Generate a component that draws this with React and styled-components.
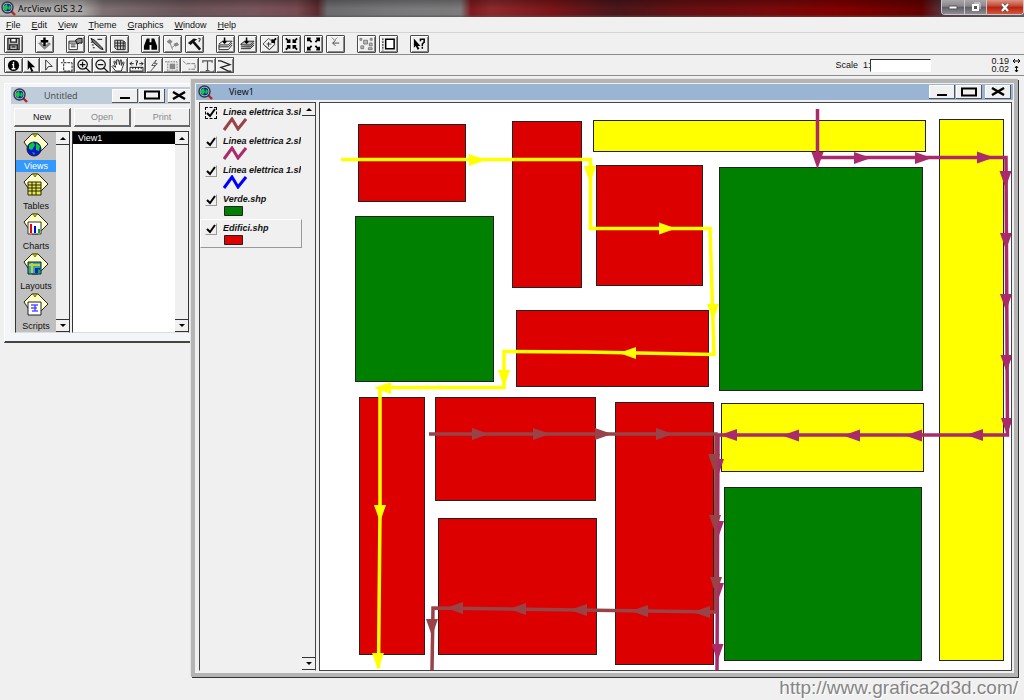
import React from "react";
import styled, { createGlobalStyle } from "styled-components";

const GlobalStyle = createGlobalStyle`
  * {
    box-sizing: border-box;
  }
  body {
    margin: 0;
    background: #f0f0f0;
  }
  button, input, ul {
    margin: 0;
    padding: 0;
    font: inherit;
    color: inherit;
  }
  svg {
    display: block;
  }
`;

const Page = styled.div`
  display: flex;
  flex-direction: column;
  min-height: 100vh;
  background: #f0f0f0;
  color: #111;
  font-family: "Liberation Sans", Arial, sans-serif;
  font-size: 9px;
  line-height: 12px;
`;

/* application frame */
const AppTitleBar = styled.header`
  display: flex;
  align-items: center;
  height: 17px;
  padding-left: 1px;
  gap: 2px;
  font-family: "Open Sans", sans-serif;
  color: #000;
  background:
    linear-gradient(rgba(0, 0, 0, 0.25), transparent 50%, transparent 85%, rgba(80, 80, 80, 0.7)),
    linear-gradient(
      90deg,
      #b5b3b3 0,
      #aaa6a6 8%,
      #7d7073 10%,
      #6b5559 18%,
      #77555b 25%,
      #754a50 29%,
      #5a2a2e 31%,
      #6b6b6e 32%,
      #77777a 38%,
      #7c7a7b 45%,
      #7d1a1d 46%,
      #8c2a2c 48%,
      #7a1418 54%,
      #4a171b 60%,
      #641013 66%,
      #780a0b 75%,
      #820000 82%,
      #640000 90%,
      #55353f 92%,
      #6d6570 100%
    );
`;
const AppTitle = styled.h1`
  flex: 1;
  margin: 0;
  font-size: 9px;
  font-weight: 400;
`;
const AppControls = styled.div`
  display: flex;
  align-self: flex-start;
  height: 15px;
  border: 1px solid #c8c8cc;
  border-top: 0;
  border-radius: 0 0 4px 4px;
  overflow: hidden;
`;
const AppControl = styled.button`
  display: grid;
  place-items: center;
  width: ${(p) => (p.$close ? 37 : 22)}px;
  border: 0;
  border-left: ${(p) => (p.$first ? "0" : "1px solid #c8c8cc")};
  background: ${(p) =>
    p.$close
      ? "linear-gradient(#dc9487, #c4452f 45%, #b32410 50%, #d8553a)"
      : "linear-gradient(#aaa6aa, #89858b 45%, #605c64 50%, #918d95)"};
`;
const MenuBar = styled.nav`
  display: flex;
  align-items: center;
  gap: 11px;
  height: 16px;
  padding-left: 6px;
  border-bottom: 1px solid #d4d4d4;
`;
const MenuItem = styled.button`
  border: 0;
  background: none;
  &::first-letter {
    text-decoration: underline;
  }
`;
const ButtonBar = styled.div`
  display: flex;
  align-items: center;
  gap: 12px;
  height: 22px;
  padding-left: 4px;
  border-bottom: 1px solid #8c8c8c;
`;
const ButtonGroup = styled.div`
  display: flex;
  gap: 3px;
`;
const IconButton = styled.button`
  display: grid;
  place-items: center;
  width: 19px;
  height: 18px;
  border: 1px solid #4c4c4c;
  border-radius: 1px;
  background: #f0f0f0;
  box-shadow: inset 1px 1px #fff, inset -1px -1px #8a8a8a;
  color: #000;
`;
const ToolBar = styled.div`
  display: flex;
  align-items: center;
  height: 21px;
  padding: 0 3px 0 4px;
  border-bottom: 1px solid #8c8c8c;
`;
const ToolStrip = styled.div`
  display: flex;
  width: 230px;
`;
const ToolButton = styled(IconButton)`
  flex: 1;
  width: auto;
  height: 16px;
  border-left-width: ${(p) => (p.$first ? 1 : 0)}px;
  background: ${(p) => (p.$active ? "#fff" : "#f0f0f0")};
`;
const ScaleField = styled.label`
  display: flex;
  align-items: center;
  margin-left: auto;
  margin-right: 60px;
`;
const ScaleInput = styled.input`
  width: 61px;
  height: 13px;
  border: 1px solid #fff;
  border-top-color: #333;
  border-left-color: #333;
  background: #fff;
`;
const Coordinates = styled.div`
  display: flex;
  align-items: center;
  gap: 3px;
  line-height: 8px;
`;

/* child windows */
const Desktop = styled.main`
  flex: 1;
  display: flex;
  align-items: flex-start;
  padding: 3px 6px 0 4px;
`;
const ProjectWindow = styled.section`
  flex: none;
  width: 187px;
  margin-top: 4px;
  padding: 3px 0 8px 6px;
  border: 1px solid #fff;
  border-right: 0;
  border-bottom: 2px solid #444;
  background: #f3f5f9;
`;
const ViewWindow = styled.section`
  flex: 1;
  align-self: stretch;
  min-width: 0;
  display: flex;
  flex-direction: column;
  padding: 1px;
  border: 4px solid #b4b4b4;
  box-shadow: 1px 1px #333, -1px -1px #e4e4e4;
  background: #f0f0f0;
`;
const WindowTitleBar = styled.div`
  display: flex;
  align-items: center;
  gap: 16px;
  height: ${(p) => (p.$active ? 16 : 17)}px;
  padding: 0 ${(p) => (p.$active ? 2 : 0)}px 0 2px;
  background: ${(p) => (p.$active ? "#9ab4d3" : "#bfcddb")};
  color: ${(p) => (p.$active ? "#000" : "#444")};
  font-family: "Open Sans", sans-serif;
`;
const WindowTitle = styled.h2`
  flex: 1;
  margin: 0;
  font-size: 9px;
  font-weight: 400;
`;
const WindowControls = styled.div`
  display: flex;
  gap: 1px;
`;
const WindowControl = styled.button`
  display: grid;
  place-items: center;
  width: ${(p) => (p.$narrow ? 23 : 26)}px;
  height: 14px;
  margin-left: ${(p) => (p.$apart ? 2 : 0)}px;
  border: 0;
  border-right: 1px solid #555;
  border-bottom: 1px solid #555;
  background: #f0f0f0;
  box-shadow: inset 1px 1px #fff;
`;
const ProjectActions = styled.div`
  display: flex;
  gap: 3px;
  padding: 4px 0 4px 3px;
  background: #f0f0f0;
`;
const ProjectButton = styled.button`
  flex: 1;
  height: 19px;
  border: 1px solid #fff;
  border-right: 2px solid #666;
  border-bottom: 2px solid #666;
  background: #f0f0f0;
  &:disabled {
    color: #8a8a8a;
  }
`;
const ProjectBody = styled.div`
  display: flex;
  gap: 2px;
  padding: 0 2px 0 4px;
  background: #f0f0f0;
`;
const ListFrame = styled.div`
  display: flex;
  flex: ${(p) => (p.$grow ? "1" : "none")};
  border: 1px solid #333;
  border-bottom-color: #ddd;
  background: #fff;
`;
const DocTypes = styled.ul`
  width: 40px;
  list-style: none;
  background: #c0c0c0;
`;
const DocType = styled.li`
  display: flex;
  flex-direction: column;
  align-items: center;
  height: 40px;
  padding-top: 1px;
`;
const DocTypeLabel = styled.button`
  width: 100%;
  height: 12px;
  margin-top: 1px;
  border: 0;
  background: ${(p) => (p.$active ? "#3399ff" : "none")};
  color: ${(p) => (p.$active ? "#fff" : "#111")};
`;
const DocList = styled.ul`
  flex: 1;
  list-style: none;
`;
const DocItem = styled.li`
  height: 12px;
  padding-left: 5px;
  background: #000;
  color: #fff;
`;
const ScrollTrack = styled.div`
  display: flex;
  flex-direction: column;
  justify-content: space-between;
  width: 13px;
  background: #f0f0f0;
`;
const ScrollButton = styled.button`
  display: grid;
  place-items: center;
  height: 13px;
  border: 0;
  border-bottom: 1px solid #333;
  border-top: ${(p) => (p.$down ? "1px solid #333" : "0")};
  background: #f0f0f0;
`;
const ViewBody = styled.div`
  flex: 1;
  display: flex;
  gap: 3px;
  min-height: 0;
  padding: 2px 1px 1px 3px;
`;
const Contents = styled.div`
  display: flex;
  flex: none;
  width: 117px;
  border: 1px solid #444;
  border-bottom-color: #f0f0f0;
`;
const ThemeList = styled.ul`
  flex: 1;
  min-width: 0;
  list-style: none;
`;
const ThemeItem = styled.li`
  display: flex;
  gap: 6px;
  height: 29px;
  padding: 3px 0 0 4px;
  border: 1px solid ${(p) => (p.$selected ? "#fff" : "transparent")};
  border-right-color: ${(p) => (p.$selected ? "#999" : "transparent")};
  border-bottom-color: ${(p) => (p.$selected ? "#999" : "transparent")};
`;
const TickCell = styled.span`
  display: grid;
  flex: none;
  width: 12px;
  height: 12px;
  > * {
    grid-area: 1 / 1;
  }
`;
const TickBox = styled.input`
  appearance: none;
  width: 12px;
  height: 12px;
  border: 1px solid #f0f0f0;
  border-right-color: #999;
  border-bottom-color: #999;
  ${(p) => p.$focus && "border: 1px dashed #000;"}
`;
const TickMark = styled.svg`
  pointer-events: none;
  width: 12px;
  height: 12px;
`;
const ThemeText = styled.label`
  display: flex;
  flex-direction: column;
  flex: 1;
  min-width: 0;
  overflow: hidden;
  font-style: italic;
  font-weight: 700;
  line-height: 10px;
  white-space: nowrap;
`;
const MapPane = styled.div`
  flex: 1;
  min-width: 0;
  border: 1px solid #444;
  background: #fff;
`;
const MapDrawing = styled.svg`
  width: 100%;
  height: 100%;
`;
const Footer = styled.footer`
  height: 23px;
  padding-right: 6px;
  text-align: right;
`;
const SiteLink = styled.a`
  color: #858585;
  font-size: 19px;
  line-height: 22px;
  text-decoration: none;
  text-shadow: 1px 1px #fff;
`;

/* icons */
const AppIcon = () => (
  <svg width="15" height="15" viewBox="0 0 15 15">
    <path d="M9 9l5 5" stroke="#b22" strokeWidth="2.4" />
    <circle cx="6.5" cy="6.5" r="5.5" fill="#cde" stroke="#333" strokeWidth="1.4" />
    <circle cx="6.5" cy="6.5" r="4" fill="#12a" />
    <path d="M3 5l3-2 1 4-2 3-2-2z" fill="#1c3" />
    <path d="M8 4l2 2-1 3-2-1z" fill="#1c3" />
  </svg>
);

const gray = "#888";
const BUTTON_GROUPS = [
  [
    ["Save Project", <path d="M2 1h12v12H2zM5 1v4h6V1M4 13V8h8v5M6 10h4" fill="#bbb" stroke="#222" strokeWidth="1.4" />],
  ],
  [
    ["Add Theme", <><path d="M1 6l3-1 4 4 5-4 2 2-7 6z" fill={gray} /><path d="M8 0v9M4 4h8" stroke="#000" strokeWidth="2.6" /></>],
  ],
  [
    ["Theme Properties", <><path d="M1 4h9v9H1zM1 6h9M3 8h5M3 10h5" fill="#fff" stroke="#222" /><path d="M8 3l3-2h4v5h-3l-2 1z" fill={gray} stroke="#000" /></>],
    ["Edit Legend", <><path d="M1 1l4 2 8 8 1 2-3-1-8-7z" fill="#777" stroke="#111" /><path d="M1 5h2M2 8h2M3 11h2M8 2h5" stroke="#000" /></>],
    ["Open Theme Table", <path d="M3 3h8l3 2v8H5l-2-2zM3 6h11M3 9h11M6 3v10M9 3v10M12 4v9" fill="#ccc" stroke="#222" />],
  ],
  [
    ["Find", <path d="M4 1h3v4h2V1h3l3 8v4H9V8H7v5H1V9z" fill="#000" />],
    ["Locate Address", <><path d="M2 4l3-2 3 2-2 3-3-1zM9 7l4-2 2 3-4 2z" fill={gray} /><path d="M5 5l3 8M11 8l-4 3" stroke={gray} /></>],
    ["Query Builder", <><path d="M1 6l6-5 4 1-3 2 7 8-2 2L6 6 4 8z" fill="#111" /><path d="M12 1h2v2h-1v2" fill="none" stroke="#333" /></>],
  ],
  [
    ["Zoom to Full Extent", <><path d="M1 7l4-3h10l-4 4H1v2h10l4-4M1 10v3h10l4-5" fill="none" stroke="#222" /><path d="M7 0v6M5 4l2 2 2-2" stroke="#000" strokeWidth="1.6" fill="none" /></>],
    ["Zoom to Active Theme", <><path d="M1 7l4-3h10l-4 4H1zM1 10h10l4-4M1 12h10l4-4" fill="#bbb" stroke="#222" /><path d="M7 0v6M5 4l2 2 2-2" stroke="#000" strokeWidth="1.6" fill="none" /></>],
    ["Zoom to Selected", <><path d="M1 7l6-6 7 6-6 6zM3 9l5 4 5-5" fill="none" stroke="#444" /><path d="M7 5v5M5 7h5" stroke="#333" /><path d="M15 1l-4 4M11 2v3h3" stroke="#000" strokeWidth="2" fill="none" /></>],
    ["Zoom In", <path d="M2 1l4 4M6 2v3H3M14 1l-4 4M10 2v3h3M2 13l4-4M6 12V9H3M14 13l-4-4M10 12V9h3" stroke="#000" strokeWidth="1.8" fill="none" />],
    ["Zoom Out", <path d="M2 1l4 4M2 4V1h3M14 1l-4 4M11 1h3v3M2 13l4-4M2 10v3h3M14 13l-4-4M11 13h3v-3" stroke="#000" strokeWidth="1.8" fill="none" />],
    ["Zoom Previous", <><path d="M4 0l3 3 3-3" stroke={gray} fill="none" /><path d="M12 6H5M8 3L5 6l3 3" stroke="#444" fill="none" /></>],
  ],
  [
    ["Select Features", <path d="M5 3h4v4H5zM1 1h2v2H1zM12 1h2v2h-2zM11 6h3v3h-3zM2 9h3v3H2zM10 11h4v2h-4z" fill="#bbb" stroke="#777" />],
    ["Clear Selected", <><path d="M5 2h9v10H5z" fill="#fff" stroke="#000" strokeWidth="1.6" /><path d="M2 1v13" stroke="#000" strokeDasharray="2 1" /></>],
  ],
  [
    ["Help", <><path d="M2 1v10l2-2 2 4 2-1-2-3h3z" fill="#000" /><path d="M9 4V2h4v3l-2 2v2M11 10v2" fill="none" stroke="#000" strokeWidth="1.6" /></>],
  ],
];

const TOOLS = [
  ["Identify", <><circle cx="8" cy="7" r="6" fill="#000" /><path d="M8 3v2M6.500 6H8v4M6 10.500h4" stroke="#fff" strokeWidth="1.5" fill="none" /></>],
  ["Pointer", <path d="M5 1v11l2-3 2 5 2-1-2-4h4z" fill="#000" />],
  ["Vertex Edit", <path d="M5 1v11l3-4h4z" fill="#fff" stroke="#222" />],
  ["Select Feature", <path d="M5 4h9v9H5zM2 4h2M5 0v3" fill="none" stroke="#111" strokeDasharray="3 1" />],
  ["Magnify", <path d="M10 9l5 5M7 1a5 5 0 1 0 .1 0M7 3v6M4 6h6" fill="none" stroke="#111" strokeWidth="1.3" />],
  ["Shrink", <path d="M10 9l5 5M7 1a5 5 0 1 0 .1 0M4 6h6" fill="none" stroke="#111" strokeWidth="1.3" />],
  ["Pan", <path d="M5 13L1 8l1-1 3 2-2-6 1-1 2 4V1h2l1 5 1-5h1v6l2-4 1 1-2 6-1 3z" fill="#fff" stroke="#222" />],
  ["Measure", <><path d="M1 9h14v4H1zM4 9v2M7 9v2M10 9v2M13 9v2" fill="#fff" stroke="#111" /><path d="M1 5h4M3 3L1 5l2 2M15 5h-4M13 3l2 2-2 2M7 2h2v2H8v3" fill="none" stroke="#111" /></>],
  ["Hot Link", <path d="M10 1L5 7h4l-5 6M10 1L8 5h3l-4 4" fill="none" stroke="#555" />],
  ["Area of Interest", <><path d="M6 5h6v6H6z" fill={gray} /><path d="M4 3h10v10H4zM1 3h2" fill="none" stroke="#777" strokeDasharray="2 1" /></>],
  ["Label", <path d="M1 2l4 4M5 5h9v6H7" fill="none" stroke="#777" strokeDasharray="4 1" />],
  ["Text", <path d="M3 4V2h10v2M8 2v10M6 12.500h4M14 13h1" fill="none" stroke="#555" strokeWidth="1.3" />],
  ["Draw", <path d="M1 2h3l10 4-10 3 8 4h3" fill="none" stroke="#222" strokeWidth="1.3" />],
];

const Tag = ({ children }) => (
  <svg width="26" height="26" viewBox="0 0 26 26">
    <path d="M1 9l8-8h6l10 10-10 10H9z" fill="#ffffcc" stroke="#222" />
    <path d="M10 1h4l-2 3z" fill="#cc0" stroke="#770" />
    {children}
  </svg>
);
const DOC_TYPES = [
  ["Views", <><circle cx="11" cy="16" r="7" fill="#11d" stroke="#123" /><path d="M6 12l4-3 2 3-3 5-3-1zM13 10l4 3-1 5-3-1zM9 19l3 1-1 2z" fill="#0c3" /></>],
  ["Tables", <path d="M5 9h13v13H5zM5 12h13M5 15h13M5 18h13M9 9v13M13 9v13" fill="#ee3" stroke="#222" />],
  ["Charts", <><path d="M5 9h13v12H5z" fill="#fff" stroke="#333" /><path d="M8 20v-9" stroke="#e00" strokeWidth="2" /><path d="M12 20v-7" stroke="#00e" strokeWidth="2" /><path d="M16 20v-4" stroke="#0a0" strokeWidth="2" /></>],
  ["Layouts", <><path d="M5 9h13v12H5z" fill="#3aa" stroke="#123" /><path d="M6 12h11M9 10v10" stroke="#cc3" strokeWidth="2" /><path d="M12 15h5v5h-5z" fill="#12c" /><path d="M15 16l2 1v3h-2z" fill="#0b3" /></>],
  ["Scripts", <><path d="M5 9h13v13H5z" fill="#fff" stroke="#222" /><path d="M8 12h7M8 15h6M9 18h6M12 12v6" stroke="#55f" strokeWidth="1.6" /></>],
];

const Controls = ({ narrow }) => (
  <WindowControls>
    <WindowControl aria-label="Minimize">
      <svg width="12" height="10"><path d="M1 8h10" stroke="#000" strokeWidth="2" /></svg>
    </WindowControl>
    <WindowControl aria-label="Maximize">
      <svg width="16" height="10"><path d="M1 1.500h14v7H1z" fill="none" stroke="#000" strokeWidth="2" /></svg>
    </WindowControl>
    <WindowControl aria-label="Close" $apart $narrow={narrow}>
      <svg width="14" height="9"><path d="M1 1l12 7M13 1L1 8" stroke="#000" strokeWidth="2.4" /></svg>
    </WindowControl>
  </WindowControls>
);

const Scrollbar = () => (
  <ScrollTrack>
    <ScrollButton aria-label="Scroll up">
      <svg width="6" height="3"><path d="M0 3l3-3 3 3z" /></svg>
    </ScrollButton>
    <ScrollButton aria-label="Scroll down" $down>
      <svg width="6" height="3"><path d="M0 0l3 3 3-3z" /></svg>
    </ScrollButton>
  </ScrollTrack>
);

const THEMES = [
  { name: "Linea elettrica 3.shp", line: "#994248" },
  { name: "Linea elettrica 2.shp", line: "#a92b6b" },
  { name: "Linea elettrica 1.shp", line: "#0000ff" },
  { name: "Verde.shp", fill: "#008000" },
  { name: "Edifici.shp", fill: "#dd0000" },
];

/* map features, as [left, top, right, bottom] */
const AREAS = [
  { color: "#dd0000", boxes: [
    [358, 124, 465, 201], [512, 121, 581, 287], [596, 165, 702, 285], [516, 310, 708, 386],
    [359, 397, 424, 654], [435, 397, 595, 500], [438, 518, 596, 654], [615, 402, 713, 664],
  ] },
  { color: "#008000", boxes: [[355, 216, 493, 381], [719, 167, 922, 390], [724, 487, 921, 660]] },
  { color: "#ffff00", boxes: [[593, 120, 925, 151], [939, 119, 1003, 660], [721, 403, 923, 471]] },
];

/* power lines: route, and each arrow as [tip x, tip y, angle] */
const LINES = [
  {
    color: "#ffff00",
    route: "341,159.5 590.5,159.5 590.5,228.5 710,228.5 714,354.5 586,352 504,351.5 504,387.5 380,387.5 380,512 378.5,668",
    arrows: [
      [486, 160, 0], [590, 183, 90], [676, 228.5, 0], [713, 321, 90], [619, 353, 180],
      [504, 387, 90], [374, 388, 180], [380, 522, 90], [378, 670, 90],
    ],
  },
  {
    color: "#a92b6b",
    route: "817.5,109 817.5,157.5 1006,157.5 1007.5,435 718,435 717,670",
    arrows: [
      [817.5, 169, 90], [871, 158, 0], [932, 158, 0], [994, 157.5, 0],
      [1005.5, 188, 90], [1006, 250, 90], [1006, 311, 90], [1006.5, 372, 90], [1007, 435, 90],
      [966, 435, 180], [905, 435.5, 180], [843, 435.5, 180], [782, 435.5, 180], [720, 435, 180],
      [718, 476, 90], [718, 538, 90], [718, 600, 90], [717.5, 661, 90],
    ],
  },
  {
    color: "#994248",
    route: "429,434 716,434 715.5,612 433,608 432,670",
    arrows: [
      [489, 434, 0], [550, 434, 0], [612, 434, 0], [673, 434, 0],
      [714, 471, 90], [715, 532, 90], [716, 594, 90],
      [693, 612, 180], [631, 611, 180], [570, 610, 180], [509, 609, 180], [446, 608, 180], [432, 636, 90],
    ],
  },
];

const CityMap = () => (
  <MapDrawing viewBox="320 103 691 567" preserveAspectRatio="xMinYMin" role="img" aria-label="View1">
    {AREAS.map((area) =>
      area.boxes.map(([l, t, r, b]) => (
        <rect key={`${l}-${t}`} x={l + 0.5} y={t + 0.5} width={r - l} height={b - t} fill={area.color} stroke="#222" />
      ))
    )}
    {LINES.map((line) => (
      <g key={line.color} fill={line.color}>
        <polyline points={line.route} fill="none" stroke={line.color} strokeWidth="3.5" />
        {line.arrows.map(([x, y, angle]) => (
          <path key={`${x}-${y}`} d="M0 0l-17-6v12z" transform={`translate(${x} ${y}) rotate(${angle})`} />
        ))}
      </g>
    ))}
  </MapDrawing>
);

export default function App() {
  return (
    <Page>
      <GlobalStyle />
      <AppTitleBar>
        <AppIcon />
        <AppTitle>ArcView GIS 3.2</AppTitle>
        <AppControls>
          <AppControl aria-label="Minimize" $first>
            <svg width="10" height="5"><path d="M1 1h8v3H1z" fill="#fff" stroke="#555" /></svg>
          </AppControl>
          <AppControl aria-label="Restore">
            <svg width="10" height="10"><path d="M3 1h6v6" fill="none" stroke="#ddd" /><path d="M2 3h5v5H2z" fill="#555" stroke="#fff" strokeWidth="2" /></svg>
          </AppControl>
          <AppControl aria-label="Close" $close>
            <svg width="10" height="9"><path d="M2 1l6 7M8 1L2 8" stroke="#555" strokeWidth="3.5" /><path d="M2 1l6 7M8 1L2 8" stroke="#fff" strokeWidth="2" /></svg>
          </AppControl>
        </AppControls>
      </AppTitleBar>
      <MenuBar>
        {["File", "Edit", "View", "Theme", "Graphics", "Window", "Help"].map((name) => (
          <MenuItem key={name}>{name}</MenuItem>
        ))}
      </MenuBar>
      <ButtonBar>
        {BUTTON_GROUPS.map((group) => (
          <ButtonGroup key={group[0][0]}>
            {group.map(([name, icon]) => (
              <IconButton key={name} aria-label={name}>
                <svg width="15" height="14" viewBox="0 0 16 14">{icon}</svg>
              </IconButton>
            ))}
          </ButtonGroup>
        ))}
      </ButtonBar>
      <ToolBar>
        <ToolStrip>
          {TOOLS.map(([name, icon], i) => (
            <ToolButton key={name} aria-label={name} $first={i === 0} $active={name === "Select Feature"}>
              <svg width="15" height="13" viewBox="0 0 16 14">{icon}</svg>
            </ToolButton>
          ))}
        </ToolStrip>
        <ScaleField>
          Scale&nbsp; 1:
          <ScaleInput type="text" />
        </ScaleField>
        <Coordinates>
          <div>
            <div>0.19</div>
            <div>0.02</div>
          </div>
          <svg width="9" height="16">
            <path d="M1 4h7M3 2L1 4l2 2M6 2l2 2-2 2M4.500 9v6M3 11l1.500-2L6 11M3 13l1.500 2L6 13" fill="none" stroke="#000" />
          </svg>
        </Coordinates>
      </ToolBar>
      <Desktop>
        <ProjectWindow>
          <WindowTitleBar>
            <AppIcon />
            <WindowTitle>Untitled</WindowTitle>
            <Controls narrow />
          </WindowTitleBar>
          <ProjectActions>
            <ProjectButton>New</ProjectButton>
            <ProjectButton disabled>Open</ProjectButton>
            <ProjectButton disabled>Print</ProjectButton>
          </ProjectActions>
          <ProjectBody>
            <ListFrame>
              <DocTypes>
                {DOC_TYPES.map(([name, icon], i) => (
                  <DocType key={name}>
                    <Tag>{icon}</Tag>
                    <DocTypeLabel $active={i === 0}>{name}</DocTypeLabel>
                  </DocType>
                ))}
              </DocTypes>
              <Scrollbar />
            </ListFrame>
            <ListFrame $grow>
              <DocList>
                <DocItem>View1</DocItem>
              </DocList>
              <Scrollbar />
            </ListFrame>
          </ProjectBody>
        </ProjectWindow>
        <ViewWindow>
          <WindowTitleBar $active>
            <AppIcon />
            <WindowTitle>View1</WindowTitle>
            <Controls />
          </WindowTitleBar>
          <ViewBody>
            <Contents>
              <ThemeList>
                {THEMES.map((theme, i) => (
                  <ThemeItem key={theme.name} $selected={i === 4}>
                    <TickCell>
                      <TickBox type="checkbox" id={`theme-${i}`} defaultChecked $focus={i === 0} />
                      <TickMark viewBox="0 0 12 12">
                        <path d="M2 6l3 3 5-7" fill="none" stroke="#000" strokeWidth="2" />
                      </TickMark>
                    </TickCell>
                    <ThemeText htmlFor={`theme-${i}`}>
                      {theme.name}
                      <svg width="24" height="14">
                        {theme.line ? (
                          <path d="M1 13L9 2l6 10 8-10" fill="none" stroke={theme.line} strokeWidth="3" />
                        ) : (
                          <path d="M1.500 2.500h18v9h-18z" fill={theme.fill} stroke="#222" />
                        )}
                      </svg>
                    </ThemeText>
                  </ThemeItem>
                ))}
              </ThemeList>
              <Scrollbar />
            </Contents>
            <MapPane>
              <CityMap />
            </MapPane>
          </ViewBody>
        </ViewWindow>
      </Desktop>
      <Footer>
        <SiteLink href="http://www.grafica2d3d.com/">http://www.grafica2d3d.com/</SiteLink>
      </Footer>
    </Page>
  );
}
